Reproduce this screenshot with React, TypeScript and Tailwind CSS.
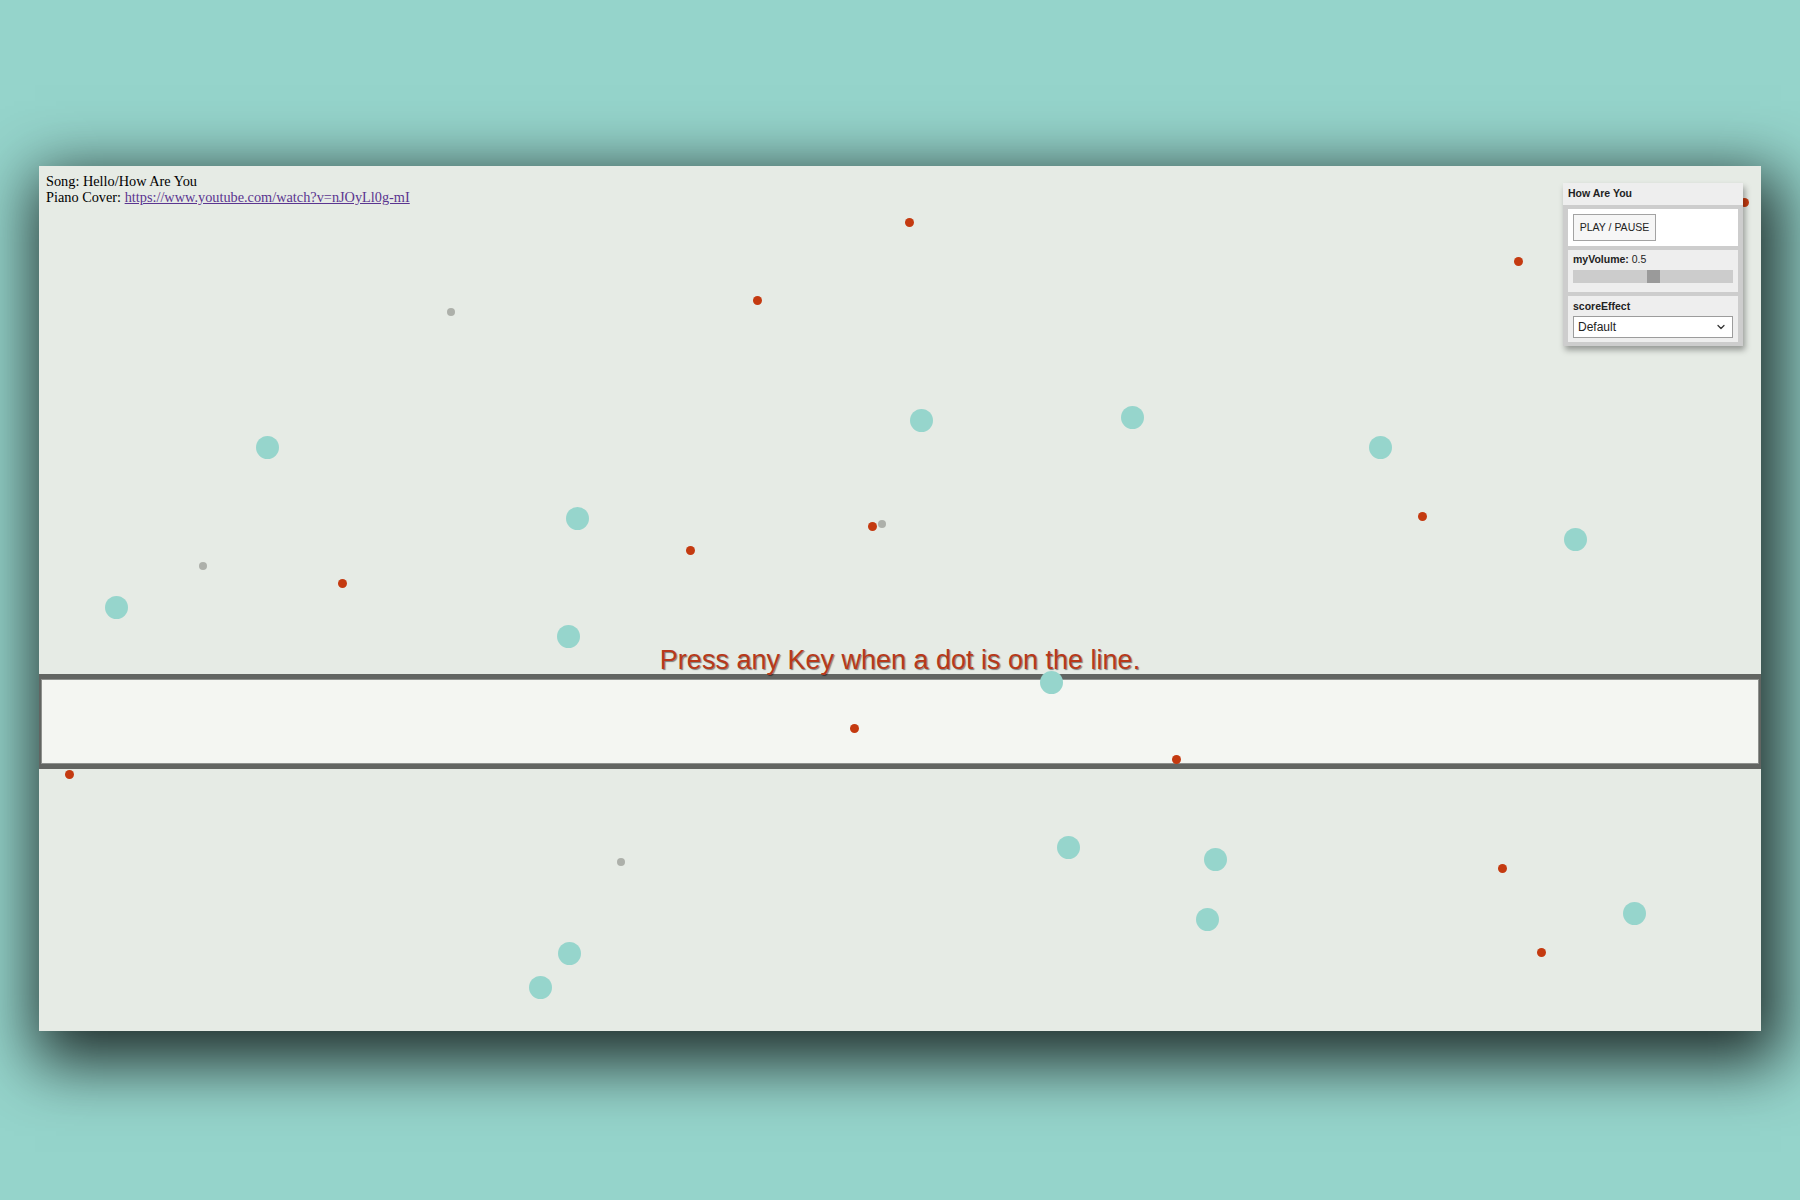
import { ChevronDown } from 'lucide-react';

type Dot = { x: number; y: number; kind: 'note' | 'hit' | 'miss' };

// centres on the canvas, in px
const dots: Dot[] = [
  { x: 870, y: 56, kind: 'hit' },
  { x: 718, y: 134, kind: 'hit' },
  { x: 1479, y: 95, kind: 'hit' },
  { x: 1705, y: 36, kind: 'hit' },
  { x: 833, y: 360, kind: 'hit' },
  { x: 651, y: 384, kind: 'hit' },
  { x: 303, y: 417, kind: 'hit' },
  { x: 1383, y: 350, kind: 'hit' },
  { x: 815, y: 562, kind: 'hit' },
  { x: 1137, y: 593, kind: 'hit' },
  { x: 30, y: 608, kind: 'hit' },
  { x: 1463, y: 702, kind: 'hit' },
  { x: 1502, y: 786, kind: 'hit' },

  { x: 412, y: 146, kind: 'miss' },
  { x: 164, y: 400, kind: 'miss' },
  { x: 843, y: 358, kind: 'miss' },
  { x: 582, y: 696, kind: 'miss' },

  { x: 228, y: 281, kind: 'note' },
  { x: 882, y: 254, kind: 'note' },
  { x: 1093, y: 251, kind: 'note' },
  { x: 1341, y: 281, kind: 'note' },
  { x: 538, y: 352, kind: 'note' },
  { x: 1536, y: 373, kind: 'note' },
  { x: 77, y: 441, kind: 'note' },
  { x: 529, y: 470, kind: 'note' },
  { x: 1012, y: 516, kind: 'note' },
  { x: 1029, y: 681, kind: 'note' },
  { x: 1176, y: 693, kind: 'note' },
  { x: 1168, y: 753, kind: 'note' },
  { x: 1595, y: 747, kind: 'note' },
  { x: 530, y: 787, kind: 'note' },
  { x: 501, y: 821, kind: 'note' },
];

const dotSize = { note: 23, hit: 9, miss: 8 };
const dotColor = {
  note: 'bg-[#96d5cc]',
  hit: 'bg-[#c43a10]',
  miss: 'bg-[#adb0aa]',
};

function ControlPanel() {
  return (
    <div className="absolute right-[18px] top-[17px] z-20 w-[180px] bg-[#cdcdcd] shadow-[2px_4px_6px_rgba(0,0,0,0.35)] font-['Liberation_Sans',Arial,sans-serif] text-[10.5px] text-[#222]">
      <div className="h-[22px] bg-[#eeeeee] pl-[5px] leading-[20px] font-bold">How Are You</div>
      <div className="flex flex-col gap-[4px] px-[5px] py-[4px]">
        {/* play */}
        <div className="h-[37px] bg-white p-[5px]">
          <button className="h-[27px] w-[83px] border border-[#a3a3a3] bg-[#f6f6f6] text-[10.5px] text-[#222]">
            PLAY / PAUSE
          </button>
        </div>
        {/* volume */}
        <div className="flex h-[42px] flex-col gap-[4px] bg-[#eeeeee] px-[5px] pt-[3px]">
          <div className="leading-[13px]">
            <span className="font-bold">myVolume:</span> 0.5
          </div>
          <div className="relative h-[13px] bg-[#cccccc]">
            <div className="absolute left-[74px] top-0 h-[13px] w-[13px] bg-[#9a9a9a]" />
          </div>
        </div>
        {/* score effect */}
        <div className="flex h-[46px] flex-col gap-[3px] bg-[#eeeeee] px-[5px] pt-[4px]">
          <div className="font-bold leading-[13px]">scoreEffect</div>
          <div className="flex h-[22px] items-center justify-between border border-[#9c9c9c] bg-white pl-[4px] pr-[5px] text-[12px]">
            <span>Default</span>
            <ChevronDown size={12} strokeWidth={2.5} className="text-[#333]" />
          </div>
        </div>
      </div>
    </div>
  );
}

export default function App() {
  return (
    <div className="flex h-[1200px] w-full items-start justify-center bg-[#95d4cb] pt-[166px]">
      <div className="relative flex h-[865px] w-[1722px] flex-col bg-[#e6ebe5] shadow-[8px_20px_60px_12px_rgba(0,0,0,0.78)]">
        {/* upper field */}
        <div className="flex h-[508px] flex-col justify-between">
          <div className="pl-[7px] pt-[7px] font-['Liberation_Serif','Times_New_Roman',serif] text-[14.3px] leading-[16px] text-black">
            <div>Song: Hello/How Are You</div>
            <div>
              Piano Cover:{' '}
              <a href="#" className="text-[#5b3590] underline">
                https://www.youtube.com/watch?v=nJOyLl0g-mI
              </a>
            </div>
          </div>
          <div className="relative z-10 text-center font-['Liberation_Sans',Arial,sans-serif] text-[27px] leading-[27px] text-[#b8391a] [text-shadow:1px_1px_1px_rgba(0,0,0,0.45)]">
            Press any Key when a dot is on the line.
          </div>
        </div>

        {/* hit line */}
        <div className="h-[95px] border-x-2 border-y-[5px] border-[#626562]">
          <div className="h-full border border-[#8e918e] bg-[#f4f6f2]" />
        </div>

        <div className="flex-1" />

        {dots.map((d, i) => (
          <div
            key={i}
            className={`absolute rounded-full ${dotColor[d.kind]}`}
            style={{
              left: d.x - dotSize[d.kind] / 2,
              top: d.y - dotSize[d.kind] / 2,
              width: dotSize[d.kind],
              height: dotSize[d.kind],
            }}
          />
        ))}

        <ControlPanel />
      </div>
    </div>
  );
}
